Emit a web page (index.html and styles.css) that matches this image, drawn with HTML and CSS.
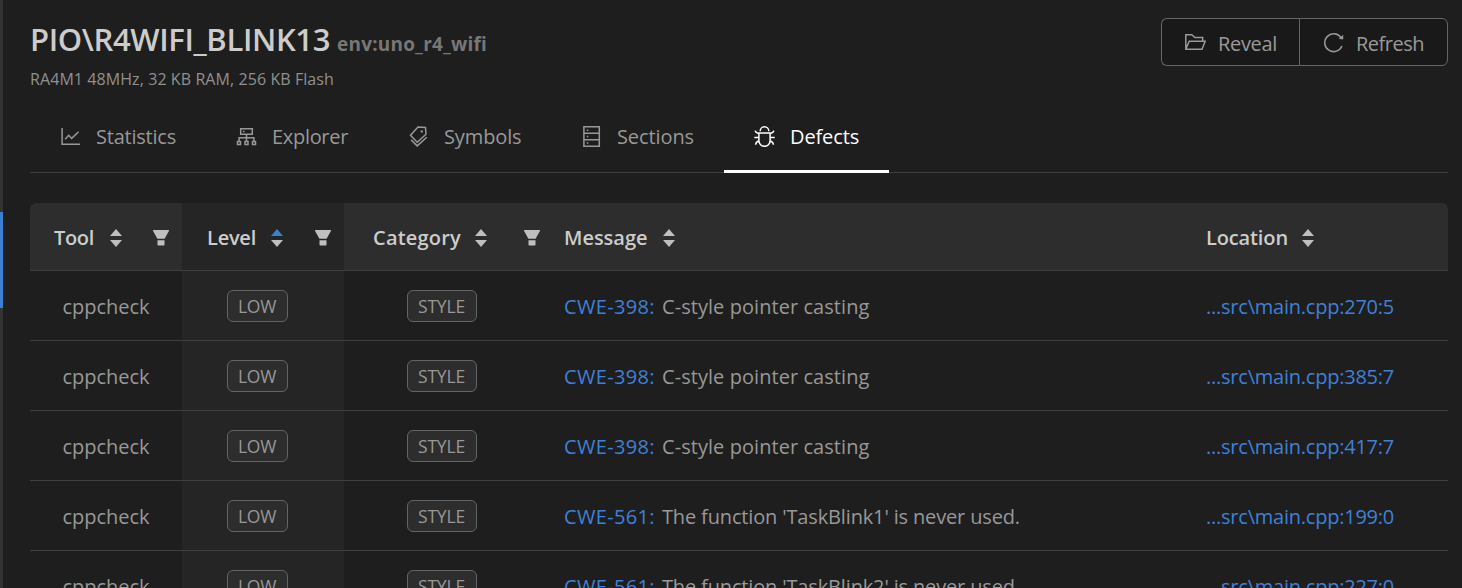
FILE: index.html
```
<!DOCTYPE html>
<html lang="en">
<head>
<meta charset="utf-8">
<title>Project Inspect</title>
<link rel="stylesheet" href="styles.css">
</head>
<body>
<svg class="defs" aria-hidden="true">
  <symbol id="sorter" viewBox="0 0 12 18"><path class="up" d="M6 0 12 7H0z"/><path class="down" d="M6 18 12 11H0z"/></symbol>
  <symbol id="filter" viewBox="0 0 16 16"><path d="M.6 0H15.4c.6 0 .8.5.5.9L11.6 8.8H4.4L.1.9C-.2.5 0 0 .6 0zM4.5 10.3h7v4.5c0 .4-.3.7-.7.7H5.2c-.4 0-.7-.3-.7-.7z"/></symbol>
</svg>
<div class="app">
  <aside class="rail"><div class="rail-active"></div></aside>
  <main class="page">
    <header class="head">
      <div>
        <h1 class="title">PIO\R4WIFI_BLINK13<small class="env">env:uno_r4_wifi</small></h1>
        <p class="board">RA4M1 48MHz, 32 KB RAM, 256 KB Flash</p>
      </div>
      <div class="actions">
        <button class="btn reveal"><svg class="icon" viewBox="0 0 21 21"><path d="M.8 17.2V2.8h6l3 2.8h7.9v3.2M.8 17.2 4.2 9.3H20.2L17 17.2z"/></svg><span>Reveal</span></button>
        <button class="btn refresh"><svg class="icon" viewBox="0 0 21 21"><path d="M17.8 5.4A8.9 8.9 0 1 0 18.9 14"/><path class="solid" d="M20.2 2.8V7.6L15.6 6.7z"/></svg><span>Refresh</span></button>
      </div>
    </header>
    <nav class="tabs">
      <a class="tab t-stat"><svg class="icon" viewBox="0 0 21 21"><path d="M2.1 2v16.2H20M5.2 13.2 8.7 9.3l3 3.1 6.9-6.7"/></svg><span>Statistics</span></a>
      <a class="tab t-expl"><svg class="icon" viewBox="0 0 21 21"><path d="M4.7 2.8h11.6v5.5H4.7zM10.5 8.3v6.5M3.1 14.8v-3.1h14.8v3.1M1.5 15.4h3v3h-3zM9 15.4h3v3H9zM16.5 15.4h3v3h-3z"/><path class="solid" d="M7 4.8h1.5v1.5H7z"/></svg><span>Explorer</span></a>
      <a class="tab t-sym"><svg class="icon" viewBox="0 0 21 21"><path d="M10 1 17.5 1.5 18 8.3 9.2 16.2 2.5 9.3zM3.1 13.9l6.1 6 9.6-8.7"/><circle class="solid" cx="13.8" cy="5.4" r="1.2"/></svg><span>Symbols</span></a>
      <a class="tab t-sec"><svg class="icon" viewBox="0 0 21 21"><path d="M2.9.8h15.4v19.4H2.9zM2.9 7.2h15.4M2.9 13.8h15.4"/><path class="solid" d="M5.8 3.4h1.5v1.5H5.8zM5.8 9.8h1.5v1.5H5.8zM5.8 16.2h1.5v1.5H5.8z"/></svg><span>Sections</span></a>
      <a class="tab t-def active"><svg class="icon" viewBox="0 0 21 21"><path d="M6.2 5.2a4.3 4.4 0 0 1 8.6 0M4.9 7h11.2v7.7a5.6 5.6 0 0 1-11.2 0zM1.2 4.7c.3 1.7 1.7 2.6 3.7 2.8M19.8 4.7c-.3 1.7-1.7 2.6-3.7 2.8M.3 11.4h4.6M16.1 11.4h4.6M4.9 14.9c-2 .4-3.1 1.6-3.3 3.9M16.1 14.9c2 .4 3.1 1.6 3.3 3.9"/></svg><span>Defects</span></a>
    </nav>
    <table class="grid">
      <colgroup><col class="c-tool"><col class="c-level"><col class="c-cat"><col class="c-msg"><col class="c-loc"></colgroup>
      <thead>
        <tr>
          <th><div class="th h-tool"><span>Tool</span><svg class="sorter"><use href="#sorter"/></svg><svg class="filter"><use href="#filter"/></svg></div></th>
          <th class="sorted"><div class="th h-level"><span>Level</span><svg class="sorter asc"><use href="#sorter"/></svg><svg class="filter"><use href="#filter"/></svg></div></th>
          <th><div class="th h-cat"><span>Category</span><svg class="sorter"><use href="#sorter"/></svg><svg class="filter"><use href="#filter"/></svg></div></th>
          <th><div class="th h-msg"><span>Message</span><svg class="sorter"><use href="#sorter"/></svg></div></th>
          <th><div class="th h-loc"><span>Location</span><svg class="sorter"><use href="#sorter"/></svg></div></th>
        </tr>
      </thead>
      <tbody>
        <tr><td class="mid">cppcheck</td><td class="mid sorted"><span class="tag low">LOW</span></td><td class="mid"><span class="tag style">STYLE</span></td><td><a class="cwe">CWE-398:</a><span class="cast">C-style pointer casting</span></td><td><a class="loc">...src\main.cpp:270:5</a></td></tr>
        <tr><td class="mid">cppcheck</td><td class="mid sorted"><span class="tag low">LOW</span></td><td class="mid"><span class="tag style">STYLE</span></td><td><a class="cwe">CWE-398:</a><span class="cast">C-style pointer casting</span></td><td><a class="loc">...src\main.cpp:385:7</a></td></tr>
        <tr><td class="mid">cppcheck</td><td class="mid sorted"><span class="tag low">LOW</span></td><td class="mid"><span class="tag style">STYLE</span></td><td><a class="cwe">CWE-398:</a><span class="cast">C-style pointer casting</span></td><td><a class="loc">...src\main.cpp:417:7</a></td></tr>
        <tr><td class="mid">cppcheck</td><td class="mid sorted"><span class="tag low">LOW</span></td><td class="mid"><span class="tag style">STYLE</span></td><td><a class="cwe">CWE-561:</a><span class="unused">The function 'TaskBlink1' is never used.</span></td><td><a class="loc">...src\main.cpp:199:0</a></td></tr>
        <tr><td class="mid">cppcheck</td><td class="mid sorted"><span class="tag low">LOW</span></td><td class="mid"><span class="tag style">STYLE</span></td><td><a class="cwe">CWE-561:</a><span class="unused">The function 'TaskBlink2' is never used.</span></td><td><a class="loc">...src\main.cpp:227:0</a></td></tr>
      </tbody>
    </table>
  </main>
</div>
</body>
</html>
```
FILE: styles.css
```
* { box-sizing: border-box; }
html, body { height: 100%; }
body {
  margin: 0;
  overflow: hidden;
  background: #1e1e1e;
  color: #989898;
  font: 20px/32px "Open Sans", "Noto Sans", sans-serif;
}
.defs { display: none; }
.app { display: flex; height: 588px; overflow: hidden; }
.rail { flex: none; width: 3px; height: 588px; padding-top: 212px; background: #333; }
.rail-active { height: 96px; background: #3c7fd2; }
.page { flex: none; width: 1445px; padding: 18px 0 0 27px; }

.head { display: flex; justify-content: space-between; height: 83px; }
.title { margin: 0; height: 42px; font-size: 31px; line-height: 42px; font-weight: 600; letter-spacing: -0.37px; color: #ccc; white-space: nowrap; }
.env { margin-left: 7px; font-size: 19px; font-weight: 700; letter-spacing: 0.2px; color: #777; }
.board { margin: 7px 0 0; font-size: 16px; line-height: 24px; letter-spacing: 0.08px; color: #909090; }

.actions { display: flex; height: 48px; }
.btn {
  display: flex; align-items: center; gap: 12px;
  padding: 0 0 0 23px; border: 1px solid #666; background: #191919;
  color: #999; font: inherit; line-height: 32px;
}
.btn span { padding-top: 3px; }
.reveal { width: 138px; border-radius: 6px 0 0 6px; border-right: 0; letter-spacing: -0.33px; }
.refresh { width: 149px; border-radius: 0 6px 6px 0; letter-spacing: -0.5px; }

.icon { flex: none; width: 21px; height: 21px; fill: none; stroke: currentColor; stroke-width: 1.5; }
.icon .solid { fill: currentColor; stroke: none; }

.tabs { display: flex; height: 72px; border-bottom: 1px solid #404040; }
.tab { display: flex; align-items: center; gap: 15px; height: 72px; padding: 0 0 1px 30px; color: #989898; }
.tab.active { color: #fff; border-bottom: 3px solid #fff; padding-bottom: 0; }
.tab.active .icon, .tab.active span { margin-top: 2px; }
.t-stat { width: 176px; letter-spacing: -0.22px; }
.t-expl { width: 172px; letter-spacing: -0.31px; }
.t-sym { width: 173px; letter-spacing: -0.12px; }
.t-sec { width: 173px; letter-spacing: -0.1px; }
.t-def { width: 165px; letter-spacing: -0.13px; }

.grid { width: 1418px; margin-top: 30px; table-layout: fixed; border-collapse: separate; border-spacing: 0; }
.c-tool { width: 152px; }
.c-level { width: 162px; }
.c-cat { width: 209px; }
.c-msg { width: 641px; }
.c-loc { width: 254px; }
th { height: 68px; padding: 0; border-bottom: 1px solid #404040; background: #2d2d2d; color: #ccc; font-weight: 600; text-align: left; }
th:first-child { border-top-left-radius: 6px; }
th:last-child { border-top-right-radius: 6px; }
th.sorted, td.sorted { background: #252525; }
.th { display: flex; align-items: center; padding: 2px 13px 0 12px; }
.th span { white-space: nowrap; }
.sorter { --up: #bfbfbf; flex: none; width: 12px; height: 18px; }
.sorter.asc { --up: #3c7fd2; }
.filter { flex: none; width: 16px; height: 16px; margin-left: auto; fill: #bfbfbf; }
.up { fill: var(--up); }
.down { fill: #bfbfbf; }
.h-tool { padding-left: 24px; letter-spacing: -0.32px; }
.h-tool span { width: 56px; }
.h-level { padding-left: 25px; letter-spacing: -0.24px; }
.h-level span { width: 64px; }
.h-cat { padding-left: 29px; letter-spacing: 0.21px; }
.h-cat span { width: 102px; }
.h-msg { padding-left: 11px; }
.h-msg span { width: 99px; letter-spacing: -0.03px; }
.h-loc span { width: 96px; letter-spacing: -0.13px; }

td { height: 70px; padding: 2px 12px 0; border-bottom: 1px solid #404040; white-space: nowrap; }
td:nth-child(4) { padding-left: 11px; }
.mid { text-align: center; }
.tag {
  display: inline-block; height: 32px; margin: -4px 12px 0 0; border: 1px solid #646464; border-radius: 6px;
  background: #2d2d2d; font-size: 17.5px; line-height: 31px; vertical-align: middle;
}
.low { width: 61px; letter-spacing: -0.3px; }
.style { width: 70px; margin-right: 14px; letter-spacing: -0.18px; }
.cwe, .loc { color: #3f80d8; }
.cwe { display: inline-block; width: 98px; letter-spacing: 0.35px; }
.cast { letter-spacing: 0.06px; }
.unused { letter-spacing: -0.15px; }
.loc { letter-spacing: -0.23px; }
```
